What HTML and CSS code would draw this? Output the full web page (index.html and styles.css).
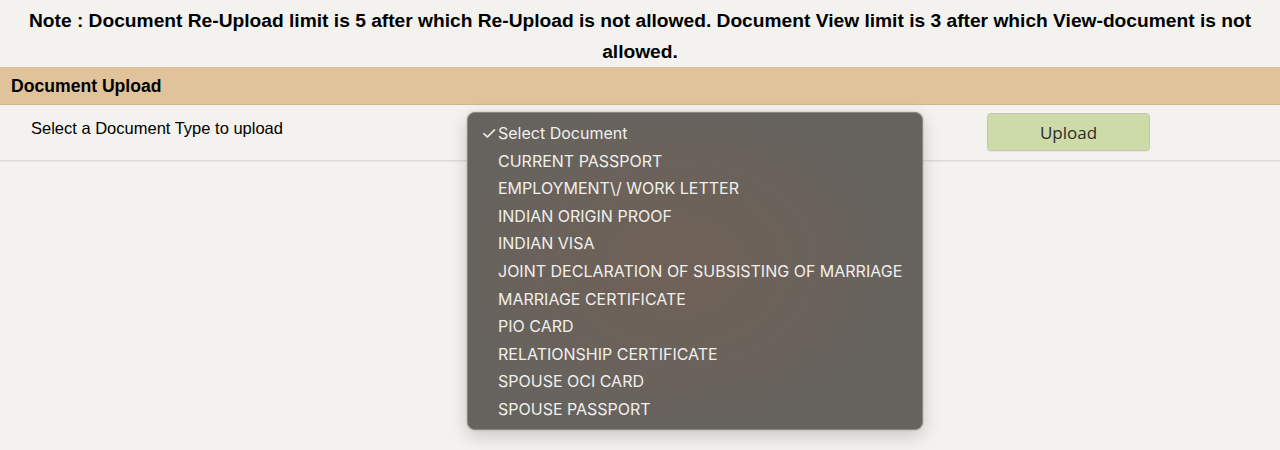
FILE: index.html
```html
<!DOCTYPE html>
<html>
<head>
<meta charset="utf-8">
<link rel="stylesheet" href="styles.css">
</head>
<body>
<p class="note">Note : Document Re-Upload limit is 5 after which Re-Upload is not allowed. Document View limit is 3 after which View-document is not allowed.</p>
<div class="panel">
  <div class="panel-head">Document Upload</div>
  <div class="panel-row">
    <div class="label">Select a Document Type to upload</div>
    <div class="select-wrap">
      <ul class="menu">
        <li class="checked"><span class="check">✓</span>Select Document</li>
        <li>CURRENT PASSPORT</li>
        <li>EMPLOYMENT\/ WORK LETTER</li>
        <li>INDIAN ORIGIN PROOF</li>
        <li>INDIAN VISA</li>
        <li>JOINT DECLARATION OF SUBSISTING OF MARRIAGE</li>
        <li>MARRIAGE CERTIFICATE</li>
        <li>PIO CARD</li>
        <li>RELATIONSHIP CERTIFICATE</li>
        <li>SPOUSE OCI CARD</li>
        <li>SPOUSE PASSPORT</li>
      </ul>
    </div>
    <button class="upload">Upload</button>
  </div>
</div>
</body>
</html>
```
FILE: styles.css
```css
html, body {
  margin: 0;
  padding: 0;
  background: #f3f2ee;
  height: 100%;
}
body {
  font-family: "Liberation Sans", Arial, sans-serif;
  color: #000;
}
.note {
  margin: 0;
  padding: 5px 20px 0;
  text-align: center;
  font-weight: bold;
  font-size: 19.2px;
  line-height: 31px;
}
.panel-head {
  background: #e0c39a;
  height: 38px;
  border-bottom: 1px solid #d2b58c;
  box-sizing: border-box;
  padding: 2px 11px 0;
  display: flex;
  align-items: center;
  font-weight: bold;
  font-size: 17.6px;
}
.panel-row {
  display: flex;
  align-items: flex-start;
  height: 56px;
  border-bottom: 1px solid #dcdad5;
  box-shadow: 0 1px 1px rgba(0,0,0,0.04);
  box-sizing: border-box;
}
.label {
  font-size: 16.5px;
  padding: 14px 0 0 31px;
  width: 436px;
}
.select-wrap {
  position: relative;
  width: 456px;
  height: 40px;
}
.menu {
  position: absolute;
  top: 7px;
  left: 0;
  width: 456px;
  height: 318px;
  box-sizing: border-box;
  margin: 0;
  padding: 7px 0 0 0;
  list-style: none;
  border-radius: 8px;
  border: 1px solid #8a8782;
  background:
    radial-gradient(ellipse 230px 170px at 46% 48%, rgba(120,95,80,0.55), rgba(120,95,80,0) 100%),
    #66635e;
  box-shadow: 0 6px 18px rgba(0,0,0,0.18), 0 0 2px rgba(0,0,0,0.25);
  font-family: Inter, "Liberation Sans", sans-serif;
  font-size: 16px;
  color: #f1efec;
  z-index: 5;
}
.menu li {
  height: 27.6px;
  line-height: 27.6px;
  padding-left: 30px;
  position: relative;
  white-space: nowrap;
}
.check {
  position: absolute;
  left: 13px;
  font-size: 18px;
}
.upload {
  margin: 8px 0 0 64px;
  width: 163px;
  height: 38px;
  background: #cddba9;
  border: 1px solid #c3c6b6;
  border-radius: 4px;
  font-family: "Open Sans", sans-serif;
  font-size: 17px;
  color: #2b2b2b;
  padding: 0;
  box-shadow: 0 1px 1px rgba(0,0,0,0.05);
}
```
